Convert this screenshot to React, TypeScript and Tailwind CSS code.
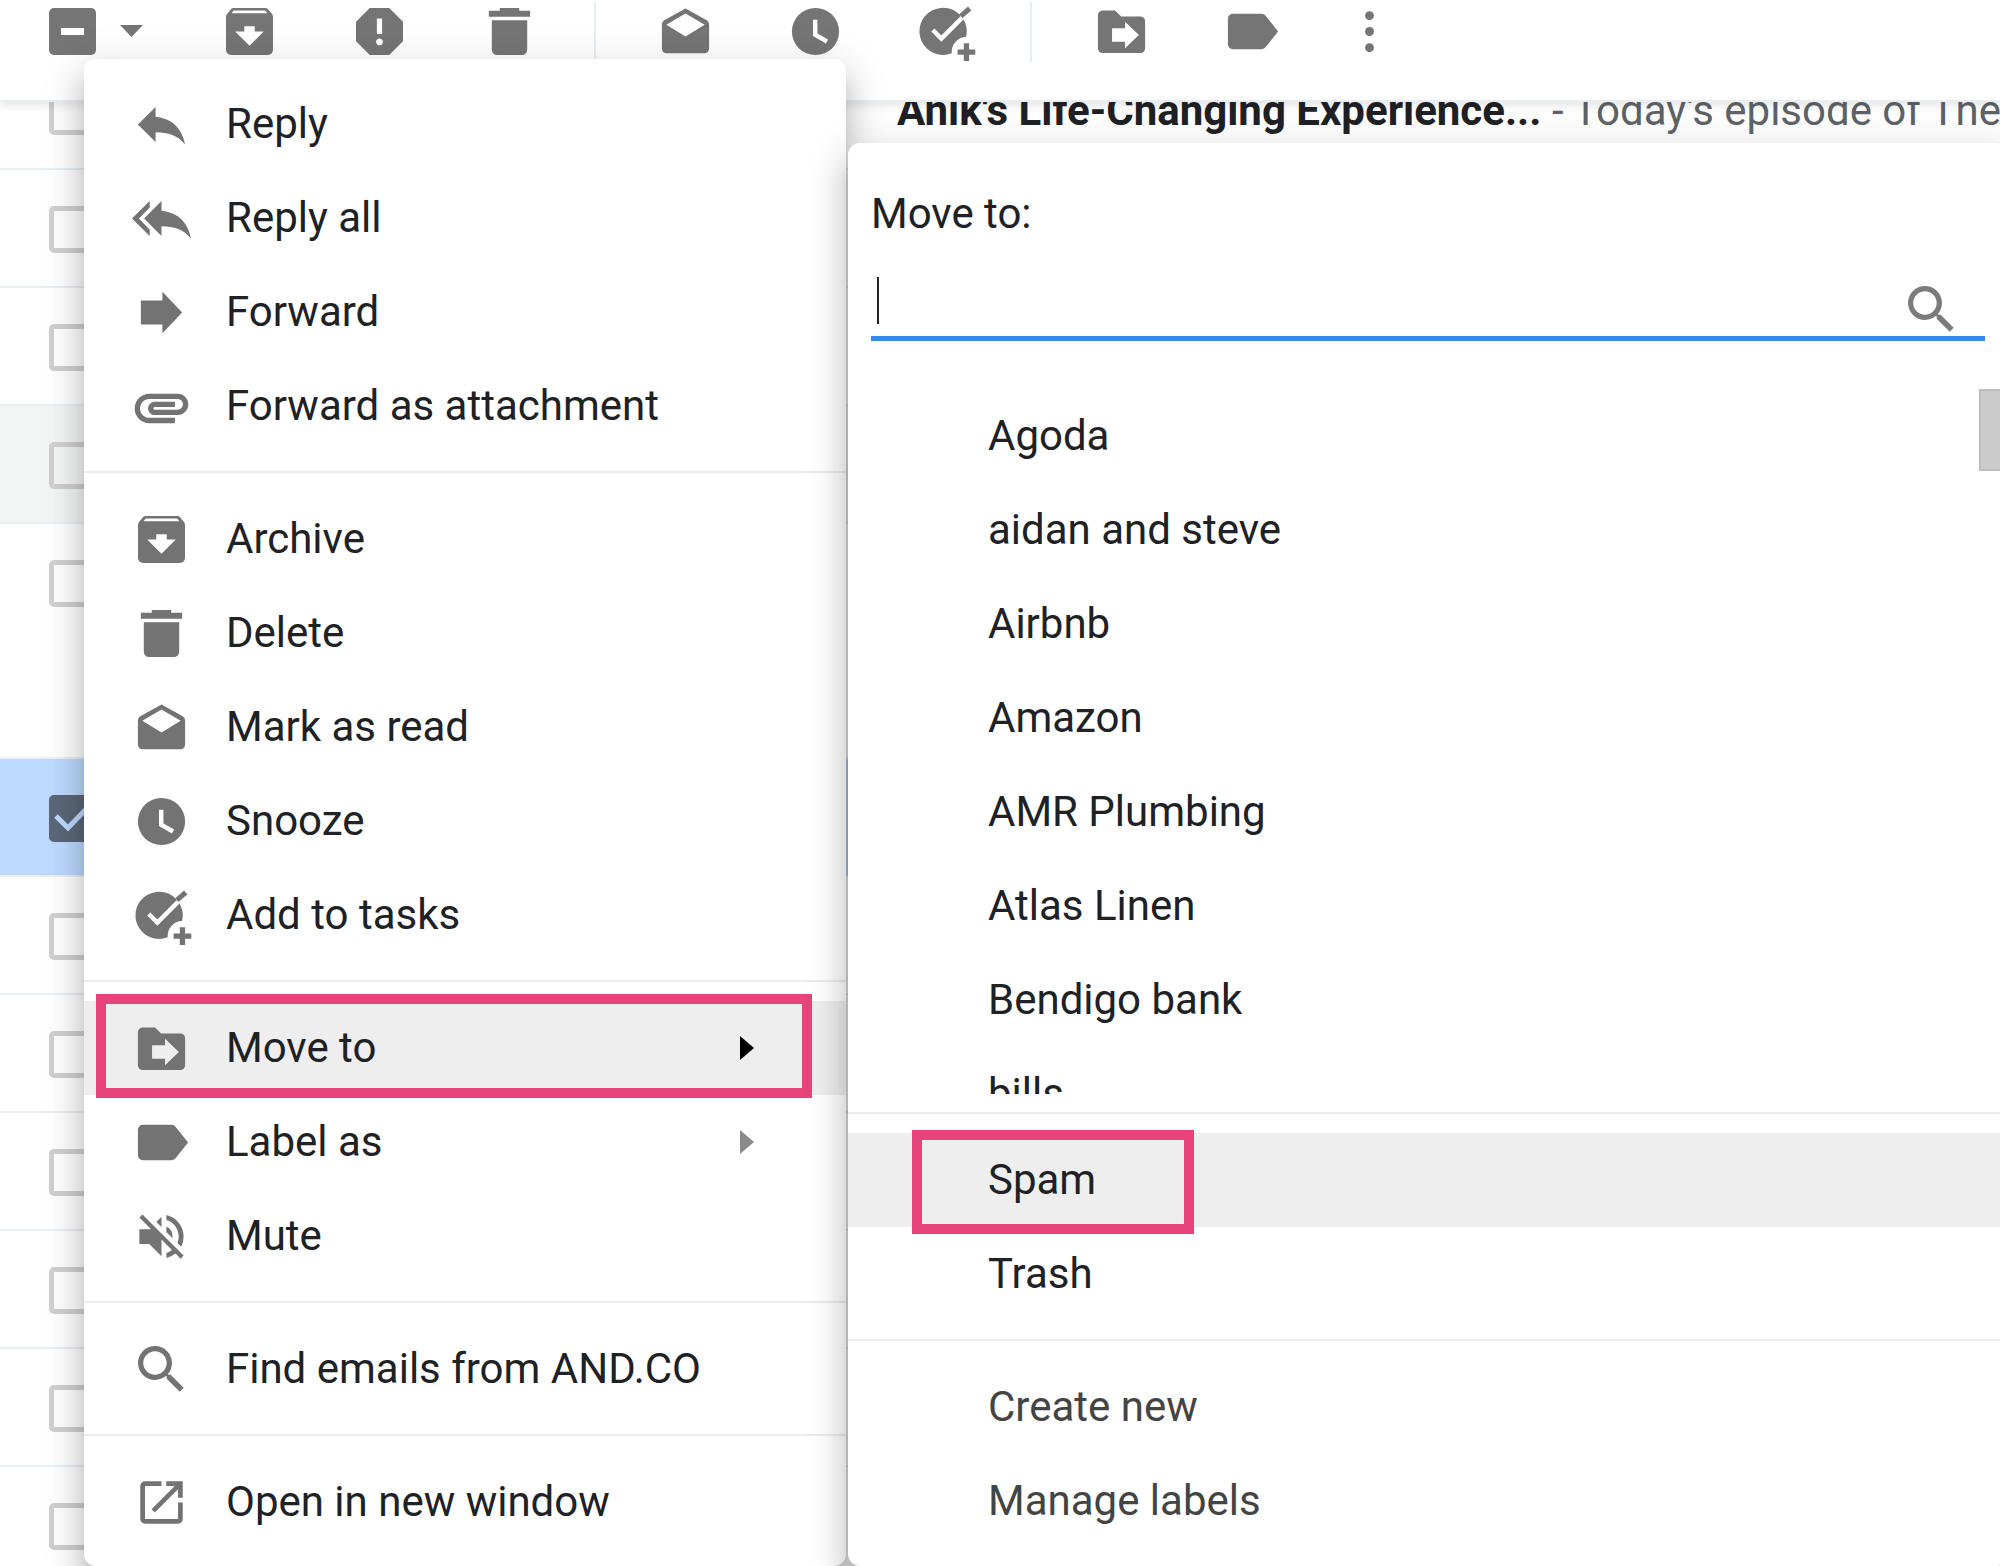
import React from 'react';
import clsx from 'clsx';
import { MdArchive, MdReport, MdSearch, MdOpenInNew, MdVolumeOff } from 'react-icons/md';

type IconType = React.FC<{ className?: string }>;

type MenuEntry = {
  label: string;
  icon: IconType;
  submenu?: boolean;
  active?: boolean;
};

type IconProps = {
  className?: string;
  viewBox?: string;
  children: React.ReactNode;
};

// 20-unit icon grid
const Icon = ({ className, viewBox = '0 0 20 20', children }: IconProps) => (
  <svg viewBox={viewBox} className={clsx('size-[59px] shrink-0 fill-current', className)} aria-hidden="true">
    {children}
  </svg>
);

const ArchiveIcon: IconType = () => <MdArchive className="size-[59px] shrink-0" viewBox="0.7 0.7 22.6 22.6" />;
const ReportIcon: IconType = () => <MdReport className="size-[59px] shrink-0" viewBox="0.7 0.7 22.6 22.6" />;
const SearchIcon: IconType = () => <MdSearch className="size-[59px] shrink-0" viewBox="0.7 0.7 22.6 22.6" />;
const MuteIcon: IconType = () => <MdVolumeOff className="size-[59px] shrink-0" viewBox="0 0 24 24" />;
const OpenIcon: IconType = () => <MdOpenInNew className="size-[59px] shrink-0" viewBox="-0.5 -0.5 25 25" />;

const ReplyIcon: IconType = () => (
  <Icon>
    <path d="M8 7.4V4.1L2 10l6 5.9v-3.3c4.3 0 7.6 1.1 10 4.2-.9-4.6-3.6-8.7-10-9.4z" />
  </Icon>
);

const ReplyAllIcon: IconType = () => (
  <Icon>
    <path d="M6 6.3V4.1L0 10l6 5.9v-2.2L2.3 10zM10 7.4V4.1L4.1 10l5.9 5.9v-3.3c4.3 0 7.6 1.1 10 4.2-.9-4.6-3.6-8.7-10-9.4z" />
  </Icon>
);

const ForwardIcon: IconType = () => (
  <Icon>
    <path d="M3 5.9h7.3V3L17 10l-6.7 7v-2.9H3z" />
  </Icon>
);

const AttachmentIcon: IconType = () => (
  <Icon viewBox="1 0.8 22 22">
    <path d="M2 12.5C2 9.46 4.46 7 7.5 7H18c2.21 0 4 1.79 4 4s-1.79 4-4 4H9.5C8.12 15 7 13.88 7 12.5S8.12 10 9.5 10H17v2H9.41c-.55 0-.55 1 0 1H18c1.1 0 2-.9 2-2s-.9-2-2-2H7.5C5.57 9 4 10.57 4 12.5S5.57 16 7.5 16H17v2H7.5C4.46 18 2 15.54 2 12.5z" />
  </Icon>
);

const TrashIcon: IconType = () => (
  <Icon>
    <path d="M6.7 2h6.6v1H17v2H3V3h3.7zM4 6.2h12v10a1.8 1.8 0 0 1-1.8 1.8H5.8A1.8 1.8 0 0 1 4 16.2z" />
  </Icon>
);

const ReadIcon: IconType = () => (
  <Icon>
    <path
      fillRule="evenodd"
      d="M10 2.2l7.2 4q.8.5.8 1.3v8.3a1.6 1.6 0 0 1-1.6 1.6H3.6A1.6 1.6 0 0 1 2 15.8V7.5q0-.8.8-1.3zM10 3.9L3.5 7.7 10 11.7l6.5-4z"
    />
  </Icon>
);

const SnoozeIcon: IconType = () => (
  <Icon>
    <circle cx="10" cy="10" r="8" />
    <path d="M9.9 6v5.1l4 2.3" fill="none" stroke="#fff" strokeWidth="1.5" />
  </Icon>
);

const TaskIcon: IconType = () => (
  <Icon className="overflow-visible">
    <path d="M16 5.8A8 8 0 1 0 12.1 17.4 5.2 5.2 0 0 1 17 11.8 8 8 0 0 0 16 5.8z" />
    <path d="M5.7 9.5l2.9 2.9 8.4-8.4" fill="none" stroke="#fff" strokeWidth="1.5" />
    <path d="M15.2 4.8l3-2.6" fill="none" stroke="currentColor" strokeWidth="1.7" />
    <path d="M17.1 14v6M14.1 17h6" fill="none" stroke="currentColor" strokeWidth="1.8" />
  </Icon>
);

const MoveIcon: IconType = () => (
  <Icon>
    <path
      fillRule="evenodd"
      d="M3.6 2.9h4.2L9.9 4.9h6.5A1.6 1.6 0 0 1 18 6.5v9.2a1.6 1.6 0 0 1-1.6 1.6H3.6A1.6 1.6 0 0 1 2 15.7V4.5a1.6 1.6 0 0 1 1.6-1.6zM6.8 8.9v4.6h4.4v2.2l4.7-4.5-4.7-4.5v2.2z"
    />
  </Icon>
);

const LabelIcon: IconType = () => (
  <Icon>
    <path d="M3.7 4h9.7q1 0 1.5.8L19 10l-4.1 5.2q-.5.8-1.5.8H3.7A1.7 1.7 0 0 1 2 14.3V5.7A1.7 1.7 0 0 1 3.7 4z" />
  </Icon>
);

const MoreIcon: IconType = () => (
  <Icon>
    <circle cx="10" cy="4.6" r="1.5" />
    <circle cx="10" cy="10" r="1.5" />
    <circle cx="10" cy="15.5" r="1.5" />
  </Icon>
);

const toolbarGroups: { label: string; icon: IconType }[][] = [
  [
    { label: 'Archive', icon: ArchiveIcon },
    { label: 'Report spam', icon: ReportIcon },
    { label: 'Delete', icon: TrashIcon },
  ],
  [
    { label: 'Mark as read', icon: ReadIcon },
    { label: 'Snooze', icon: SnoozeIcon },
    { label: 'Add to tasks', icon: TaskIcon },
  ],
  [
    { label: 'Move to', icon: MoveIcon },
    { label: 'Labels', icon: LabelIcon },
    { label: 'More', icon: MoreIcon },
  ],
];

const menuGroups: MenuEntry[][] = [
  [
    { label: 'Reply', icon: ReplyIcon },
    { label: 'Reply all', icon: ReplyAllIcon },
    { label: 'Forward', icon: ForwardIcon },
    { label: 'Forward as attachment', icon: AttachmentIcon },
  ],
  [
    { label: 'Archive', icon: ArchiveIcon },
    { label: 'Delete', icon: TrashIcon },
    { label: 'Mark as read', icon: ReadIcon },
    { label: 'Snooze', icon: SnoozeIcon },
    { label: 'Add to tasks', icon: TaskIcon },
  ],
  [
    { label: 'Move to', icon: MoveIcon, submenu: true, active: true },
    { label: 'Label as', icon: LabelIcon, submenu: true },
    { label: 'Mute', icon: MuteIcon },
  ],
  [{ label: 'Find emails from AND.CO', icon: SearchIcon }],
  [{ label: 'Open in new window', icon: OpenIcon }],
];

const labels = ['Agoda', 'aidan and steve', 'Airbnb', 'Amazon', 'AMR Plumbing', 'Atlas Linen', 'Bendigo bank', 'bills'];

const mailRows = [
  { id: 1, subject: "Anik's Life-Changing Experience...", snippet: "Today's episode of The" },
  { id: 2 },
  { id: 3 },
  { id: 4, read: true },
  { id: 5, tall: true },
  { id: 6, selected: true },
  { id: 7 },
  { id: 8 },
  { id: 9 },
  { id: 10 },
  { id: 11 },
  { id: 12 },
];

const popupShadow =
  'shadow-[0_24px_29px_3px_rgba(0,0,0,0.14),0_9px_41px_6px_rgba(0,0,0,0.12),0_15px_15px_-9px_rgba(0,0,0,0.2)]';

const Separator = () => <div role="separator" className="mt-[18px] mb-[19px] h-[2px] bg-[#ebebeb]" />;

const Toolbar = () => (
  <header className="relative flex h-[102px] items-start border-b-2 border-[#e9eef2] bg-white text-[#757575] shadow-[0_4px_8px_rgba(0,0,0,0.1)]">
    <div className="flex h-[62px] w-[184px] items-center pl-[49px]">
      <span className="relative flex size-[47px]">
        <input type="checkbox" aria-label="Select" className="size-[47px] appearance-none rounded-[5px] bg-[#757575]" />
        <span className="pointer-events-none absolute top-5 left-3 h-[7px] w-[23px] bg-white" />
      </span>
      <button type="button" aria-label="Select options" className="ml-6">
        <svg viewBox="0 0 23 12" className="h-3 w-[23px] fill-current">
          <path d="M0 0h23L11.5 12z" />
        </svg>
      </button>
    </div>
    {toolbarGroups.map((group, index) => (
      <React.Fragment key={index}>
        {index > 0 && <span className="mx-5 mt-[2px] h-[60px] w-[2px] bg-[#e9eef2]" />}
        <div className={clsx('flex', index > 0 && 'pl-1')}>
          {group.map(({ label, icon: ItemIcon }) => (
            <button
              key={label}
              type="button"
              aria-label={label}
              className={clsx('flex h-[62px] items-center justify-center', label === 'More' ? 'w-[106px]' : 'w-[130px]')}
            >
              <ItemIcon />
            </button>
          ))}
        </div>
      </React.Fragment>
    ))}
  </header>
);

const MailList = () => (
  <ul className="-mt-[50px]">
    {mailRows.map((row) => (
      <li
        key={row.id}
        className={clsx(
          'border-b-2 border-[#e9eef2]',
          row.tall ? 'h-[235px]' : 'h-[118px]',
          row.read && 'bg-[#f4f6f5]',
          row.selected && 'bg-[#bedaff]',
        )}
      >
        <div className="flex h-[118px] items-center pl-[49px] whitespace-nowrap">
          <span className="relative flex size-[47px] shrink-0">
            <input
              type="checkbox"
              aria-label="Select conversation"
              defaultChecked={row.selected}
              className="size-[47px] appearance-none rounded-[5px] border-[5px] border-[#d0d0d0] checked:border-[#5b6879] checked:bg-[#5b6879]"
            />
            {row.selected && (
              <svg viewBox="0 0 47 47" className="pointer-events-none absolute inset-0 size-[47px]">
                <path d="M7 21l12 12L41 10" fill="none" stroke="#bedaff" strokeWidth="5" />
              </svg>
            )}
          </span>
          {row.subject && (
            <p className="ml-[801px] text-[#5f6368]">
              <span className="font-bold text-[#202124]">{row.subject}</span> - {row.snippet}
            </p>
          )}
        </div>
      </li>
    ))}
  </ul>
);

const ContextMenu = () => (
  <div
    role="menu"
    className={clsx('absolute top-[59px] left-[84px] w-[762px] rounded-[12px] bg-white pt-[18px] pb-[17px]', popupShadow)}
  >
    {menuGroups.map((group, index) => (
      <React.Fragment key={index}>
        {index > 0 && <Separator />}
        {group.map(({ label, icon: ItemIcon, submenu, active }) => (
          <button
            key={label}
            type="button"
            role="menuitem"
            className={clsx('relative flex h-[94px] w-full items-center pr-[92px] pl-12 text-left', active && 'bg-[#eeeeee]')}
          >
            <span className="text-[#737373]">
              <ItemIcon />
            </span>
            <span className="ml-[35px] flex-1">{label}</span>
            {submenu && (
              <svg viewBox="0 0 14 24" className={clsx('h-6 w-[14px]', active ? 'fill-black' : 'fill-[#8a8a8a]')}>
                <path d="M0 0l14 12L0 24z" />
              </svg>
            )}
            {active && (
              <span className="pointer-events-none absolute -top-[7px] right-[34px] left-3 h-[104px] border-[10px] border-[#e8447c]" />
            )}
          </button>
        ))}
      </React.Fragment>
    ))}
  </div>
);

const SubmenuItem = ({ label, active, muted }: { label: string; active?: boolean; muted?: boolean }) => (
  <button
    type="button"
    role="menuitem"
    className={clsx(
      'relative flex h-[94px] w-full shrink-0 items-center pl-[140px] text-left',
      active && 'bg-[#eeeeee]',
      muted && 'text-[#444444]',
    )}
  >
    {label}
    {active && (
      <span className="pointer-events-none absolute -top-[3px] left-16 h-[104px] w-[282px] border-[10px] border-[#e8447c]" />
    )}
  </button>
);

const MoveToMenu = () => (
  <div
    role="menu"
    className={clsx('absolute top-[143px] -right-2 left-[848px] rounded-[12px] bg-white pt-[47px] pb-[18px]', popupShadow)}
  >
    <div className="mr-[23px] ml-[23px]">
      <label htmlFor="label-search" className="block leading-[48px]">
        Move to:
      </label>
      <div className="mt-5 flex h-[83px] items-center border-b-[5px] border-[#3b87f0] pl-[6px]">
        <span className="mt-[6px] h-[47px] w-[2px] bg-[#202124]" />
        <input id="label-search" type="text" className="h-full flex-1 caret-transparent outline-none" />
        <span className="mt-6 mr-6 text-[#7b7b7b]">
          <SearchIcon />
        </span>
      </div>
    </div>
    <div className="mt-12 flex h-[705px] overflow-hidden">
      <div className="flex flex-1 flex-col">
        {labels.map((label) => (
          <SubmenuItem key={label} label={label} />
        ))}
      </div>
      <div className="h-[82px] w-[29px] border-2 border-[#bdbdbd] bg-[#cbcbcb]" />
    </div>
    <Separator />
    <SubmenuItem label="Spam" active />
    <SubmenuItem label="Trash" />
    <Separator />
    <SubmenuItem label="Create new" muted />
    <SubmenuItem label="Manage labels" muted />
  </div>
);

export default function App() {
  return (
    <main className="relative h-screen overflow-hidden bg-white font-['Roboto','Liberation_Sans',sans-serif] text-[42px] leading-[48px] text-[#202124]">
      <div className="flex flex-col">
        <div className="z-10">
          <Toolbar />
        </div>
        <MailList />
      </div>
      <div className="absolute inset-0 z-20">
        <ContextMenu />
        <MoveToMenu />
      </div>
    </main>
  );
}
